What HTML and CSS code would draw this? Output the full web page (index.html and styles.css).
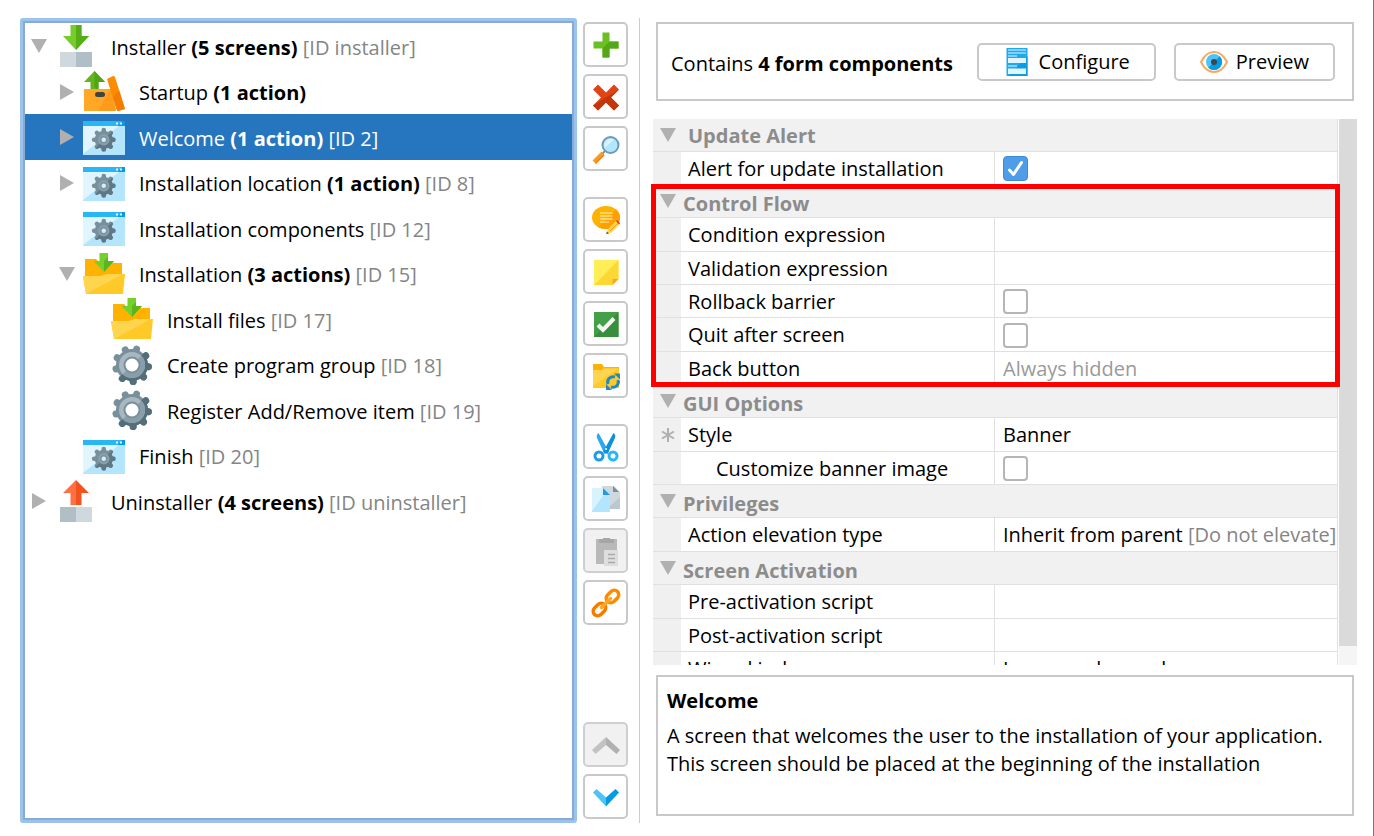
FILE: index.html
```html
<!DOCTYPE html>
<html lang="en">
<head>
<meta charset="utf-8">
<title>Screens &amp; Actions</title>
<link rel="stylesheet" href="styles.css">
</head>
<body>
<svg class="sprite" aria-hidden="true">
  <defs>
    <clipPath id="lower-right"><path d="M42 0V42H0z"/></clipPath>
    <g id="teeth9" stroke-width="7" stroke-linecap="round">
      <path d="M21 21V4.500"/>
      <path d="M21 21V4.500" transform="rotate(40 21 21)"/>
      <path d="M21 21V4.500" transform="rotate(80 21 21)"/>
      <path d="M21 21V4.500" transform="rotate(120 21 21)"/>
      <path d="M21 21V4.500" transform="rotate(160 21 21)"/>
      <path d="M21 21V4.500" transform="rotate(200 21 21)"/>
      <path d="M21 21V4.500" transform="rotate(240 21 21)"/>
      <path d="M21 21V4.500" transform="rotate(280 21 21)"/>
      <path d="M21 21V4.500" transform="rotate(320 21 21)"/>
    </g>
    <g id="teeth8" stroke-width="8" stroke-linecap="round">
      <path d="M21 4V38M4 21H38M9 9L33 33M33 9L9 33"/>
    </g>
    <symbol id="i-gear" viewBox="0 0 42 42">
      <g transform="rotate(16 21 21)"><use href="#teeth9" stroke="#78909c"/></g>
      <circle cx="21" cy="21" r="16" fill="#78909c"/>
      <g clip-path="url(#lower-right)">
        <g transform="rotate(16 21 21)"><use href="#teeth9" stroke="#546e7a"/></g>
        <circle cx="21" cy="21" r="16" fill="#546e7a"/>
      </g>
      <circle cx="21" cy="21" r="13" fill="#a9b8c0"/>
      <circle cx="21" cy="21" r="13" fill="#8a9ea9" clip-path="url(#lower-right)"/>
      <circle cx="21" cy="21" r="8.500" fill="#78909c"/>
      <circle cx="21" cy="21" r="6.500" fill="#fff"/>
    </symbol>
    <symbol id="i-window" viewBox="0 0 42 42">
      <path fill="#b3e5fc" d="M0 5h42v34H0z"/>
      <path fill="#e1f5fe" d="M0 10h36L0 38z"/>
      <path fill="#29b6f6" d="M0 5h42v5H0z"/>
      <path fill="#039be5" d="M39 5h3v5h-7z"/>
      <path fill="#e1f5fe" d="M33 6.500h2v2h-2zM37 6.500h2v2h-2z"/>
      <g transform="translate(8.800 11.800) scale(.57)">
        <use href="#teeth8" stroke="#78909c"/>
        <circle cx="21" cy="21" r="16" fill="#78909c"/>
        <g clip-path="url(#lower-right)"><use href="#teeth8" stroke="#607885"/><circle cx="21" cy="21" r="16" fill="#607885"/></g>
        <circle cx="21" cy="21" r="10" fill="#8a9ea9"/>
        <circle cx="21" cy="21" r="6" fill="#78909c"/>
        <circle cx="21" cy="21" r="4" fill="#cfeefc"/>
      </g>
    </symbol>
    <symbol id="i-installer" viewBox="0 0 42 42">
      <path fill="#cfd8dc" d="M5 27h16v15H5z"/><path fill="#b0bec5" d="M21 27h16v15H21z"/>
      <path fill="#76cc28" d="M15.500 0h11v11H34L21 25 8 11h7.500z"/>
      <path fill="#55ad17" d="M21 0h5.500v11H34L21 25z"/>
    </symbol>
    <symbol id="i-uninstaller" viewBox="0 0 42 42">
      <path fill="#b0bec5" d="M5 27h16v15H5z"/><path fill="#cfd8dc" d="M21 27h16v15H21z"/>
      <path fill="#ff7043" d="M21 0 8 13h7.500v12H21z"/><path fill="#f4511e" d="M21 0l13 13h-7.500v12H21z"/>
    </symbol>
    <symbol id="i-startup" viewBox="0 0 42 42">
      <path fill="#64b41e" d="M11.500 0 1 11h6.500v8h8v-8H22z"/>
      <path fill="#4fa615" d="M11.500 0 22 11h-6.500v8l-4-2z"/>
      <path fill="#ffa726" d="M1 18h28l4 22H1z"/>
      <path fill="#ff9a1a" d="M28 18l5 22H15z"/>
      <path fill="#fb8c00" d="M24 8l6-3q1.500 0 2 1l10 32-7 2q-1 0-1.500-2z"/>
      <path fill="#f57c00" d="M36 19l6 19-7 2q-1 0-1.500-2L30 26z"/>
      <rect x="12" y="21" width="10" height="5" rx="2.500" fill="#424242"/>
    </symbol>
    <symbol id="i-folder-in" viewBox="0 0 42 42">
      <path fill="#ffb300" d="M2 6h11l4 4h22v15H2z"/>
      <path fill="#76d02c" d="M16.500 0H25v8h6L21 19 10.500 8h6z"/>
      <path fill="#5cb41e" d="M21 8l4-4v4h6L21 19z"/>
      <path fill="#ffca28" d="M0 23h18l6-2h18l-2 20H3z"/>
      <path fill="#ffd54f" d="M0 23h18l6-2h16L3 41z"/>
    </symbol>
    <symbol id="i-down-tri" viewBox="0 0 16 16"><path fill="#b0b0b0" d="M0 1h16L8 15z"/></symbol>
    <symbol id="i-right-tri" viewBox="0 0 16 16"><path fill="#b0b0b0" d="M1 0l14 8L1 16z"/></symbol>
  </defs>
</svg>

<ul class="tree" role="tree" aria-label="Screens and actions">
  <li role="treeitem" class="node"><button class="toggle" aria-label="Collapse"><svg><use href="#i-down-tri"/></svg></button><svg class="icon"><use href="#i-installer"/></svg><span class="label">Installer <b>(5 screens)</b> <i>[ID installer]</i></span></li>
  <li role="treeitem" class="node level-1"><button class="toggle" aria-label="Expand"><svg><use href="#i-right-tri"/></svg></button><svg class="icon"><use href="#i-startup"/></svg><span class="label">Startup <b>(1 action)</b></span></li>
  <li role="treeitem" class="node level-1 selected" aria-selected="true"><button class="toggle" aria-label="Expand"><svg><use href="#i-right-tri"/></svg></button><svg class="icon"><use href="#i-window"/></svg><span class="label">Welcome <b>(1 action)</b> <i>[ID 2]</i></span></li>
  <li role="treeitem" class="node level-1"><button class="toggle" aria-label="Expand"><svg><use href="#i-right-tri"/></svg></button><svg class="icon"><use href="#i-window"/></svg><span class="label">Installation location <b>(1 action)</b> <i>[ID 8]</i></span></li>
  <li role="treeitem" class="node level-1"><span class="toggle"></span><svg class="icon"><use href="#i-window"/></svg><span class="label">Installation components <i>[ID 12]</i></span></li>
  <li role="treeitem" class="node level-1"><button class="toggle" aria-label="Collapse"><svg><use href="#i-down-tri"/></svg></button><svg class="icon"><use href="#i-folder-in"/></svg><span class="label">Installation <b>(3 actions)</b> <i>[ID 15]</i></span></li>
  <li role="treeitem" class="node level-2"><span class="toggle"></span><svg class="icon"><use href="#i-folder-in"/></svg><span class="label">Install files <i>[ID 17]</i></span></li>
  <li role="treeitem" class="node level-2"><span class="toggle"></span><svg class="icon"><use href="#i-gear"/></svg><span class="label">Create program group <i>[ID 18]</i></span></li>
  <li role="treeitem" class="node level-2"><span class="toggle"></span><svg class="icon"><use href="#i-gear"/></svg><span class="label">Register Add/Remove item <i>[ID 19]</i></span></li>
  <li role="treeitem" class="node level-1"><span class="toggle"></span><svg class="icon"><use href="#i-window"/></svg><span class="label">Finish <i>[ID 20]</i></span></li>
  <li role="treeitem" class="node"><button class="toggle" aria-label="Expand"><svg><use href="#i-right-tri"/></svg></button><svg class="icon"><use href="#i-uninstaller"/></svg><span class="label">Uninstaller <b>(4 screens)</b> <i>[ID uninstaller]</i></span></li>
</ul>

<div class="toolbar" role="toolbar" aria-label="Tree actions">
  <div class="tools">
    <button class="tool" aria-label="Add"><svg viewBox="0 0 28 28"><path fill="#6abf23" d="M10.500 1.500h7v9h9v7h-9v9h-7v-9h-9v-7h9z"/><path fill="#54a818" d="M17.500 10.500h9v7h-9v9h-7v-9z"/></svg></button>
    <button class="tool" aria-label="Delete"><svg viewBox="0 0 28 28"><path fill="#e04416" d="M6 1.500l8 8 8-8 5 5-8 8 8 8-5 5-8-8-8 8-5-5 8-8-8-8z"/><path fill="#c2360c" d="M27 6.500l-8 8 8 8-5 5-8-8-8 8-5-5z"/></svg></button>
    <button class="tool" aria-label="Search"><svg viewBox="0 0 28 28"><path stroke="#78909c" stroke-width="2" d="M13 16l-3 3"/><path stroke="#fb9a1e" stroke-width="4" d="M11 18l-9 9"/><path stroke="#ef7f0a" stroke-width="1.500" d="M12 20l-8.500 8.500"/><circle cx="18.500" cy="10" r="8" fill="#b3e5fc" stroke="#6c9bb8" stroke-width="2"/><path fill="#d9f3fe" d="M12.500 13A7 7 0 0 1 22 4.500z"/></svg></button>
  </div>
  <div class="tools">
    <button class="tool" aria-label="Comment"><svg viewBox="0 0 28 28"><ellipse cx="14" cy="11.500" rx="14" ry="11.500" fill="#ffb300"/><path fill="#ffa000" d="M24 3.500A14 11.500 0 0 1 6 21z"/><path stroke="#fff3d0" stroke-width="1.200" d="M8 7h12.500M8 10h12.500M8 13h12.500M8 16h9"/><path fill="#ffd54f" d="M24 15l3.500 3.500-8 8-5 1.500 1.500-5z"/><path fill="#e53935" d="M24 15l1-.8q1 0 3 3.300l-1 1z"/><path fill="#6d4c41" d="M15 25.500l2 2-3 .5z"/><path stroke="#f0a020" d="M26 17l-8 8"/></svg></button>
    <button class="tool" aria-label="Note"><svg viewBox="0 0 28 28"><path fill="#ffee58" d="M2 2h24.500v19l-6 6H2z"/><path fill="#fdd835" d="M26.500 2v19l-6 6H2z"/><path fill="#f9a825" d="M20.500 27v-6h6z"/></svg></button>
    <button class="tool" aria-label="Enable"><svg viewBox="0 0 28 28"><path fill="#43a047" d="M2 2h24.500v25H2z"/><path fill="#388e3c" d="M26.500 2v25H2z"/><path fill="none" stroke="#f5f5f5" stroke-width="4" d="M6 15l5 5L22 8.500"/></svg></button>
    <button class="tool" aria-label="Update folder"><svg viewBox="0 0 28 28"><path fill="#ffb300" d="M1 2h9l2 3h15v7H1z"/><path fill="#ffca28" d="M1 8h9l2-1.500h15V26H1z"/><path fill="#ffd54f" d="M1 8h9l2-1.500h14L1 24z"/><g fill="none" stroke="#1e88c9" stroke-width="3"><path d="M16 22a5.500 5.500 0 0 1 7-7M26 18a5.500 5.500 0 0 1-7 7"/></g><path fill="#1e88c9" d="M22 11.500h6v6zM20 28h-6v-6z"/></svg></button>
  </div>
  <div class="tools">
    <button class="tool" aria-label="Cut"><svg viewBox="0 0 28 28"><path fill="#29a9ee" d="M6.500 0q-3 2-1 6l7 15 4.500-2z"/><path fill="#0d8fdc" d="M21.500 0q3 2 1 6l-7 15-4.500-2z"/><circle cx="14" cy="16" r="1" fill="#fff"/><g fill="none" stroke-width="3"><circle cx="7" cy="23" r="4" stroke="#1e9be6"/><circle cx="21" cy="23" r="4" stroke="#29b6f6"/></g></svg></button>
    <button class="tool" aria-label="Copy"><svg viewBox="0 0 28 28"><path fill="#cfd8dc" d="M10 1h12l6 6v17H10z"/><path fill="#bcc8ce" d="M28 12v12H15z"/><path fill="#78909c" d="M21 1l6 6h-6z"/><path fill="#b3e5fc" d="M0 3h11l7 7v17H0z"/><path fill="#d9f3fe" d="M0 3h11l3 4L0 26z"/><path fill="#1e9be6" d="M11 3l7 7h-7z"/></svg></button>
    <button class="tool" aria-label="Paste" disabled><svg viewBox="0 0 28 28"><path fill="#b9b9b9" d="M4 2h21v25H4z"/><path fill="#a6a6a6" d="M7 2h4V1h7v1h4v4H7z"/><path fill="#dedede" d="M12 13h14v16H12z"/><path stroke="#aaa" stroke-width="1.500" d="M16 17.500h7M16 21.500h7M16 25.500h7"/></svg></button>
    <button class="tool" aria-label="Link"><svg viewBox="0 0 28 28"><g fill="none" stroke-width="3.500"><rect x="-7" y="-4.500" width="14" height="9" rx="4.500" stroke="#f57c00" transform="translate(7.500 20.500) rotate(-45)"/><rect x="-7" y="-4.500" width="14" height="9" rx="4.500" stroke="#fb8c00" transform="translate(20.500 7.500) rotate(-45)"/><path stroke="#ffa726" stroke-linecap="round" d="M9.500 18.500l9-9"/></g></svg></button>
  </div>
  <div class="tools last">
    <button class="tool" aria-label="Move up" disabled><svg viewBox="0 0 28 28"><path fill="#c2c2c2" d="M14 6v8L3.500 23 0 19z"/><path fill="#b0b0b0" d="M14 6v8l10.500 9L28 19z"/></svg></button>
    <button class="tool" aria-label="Move down"><svg viewBox="0 0 28 28"><path fill="#4fc3f7" d="M14 23.500v-9L4.500 6 1 9.500z"/><path fill="#039be5" d="M14 23.500v-9L23.500 6 27 9.500z"/></svg></button>
  </div>
</div>

<main class="details">
  <section class="panel form-panel">
    <p>Contains <b>4 form components</b></p>
    <button class="action"><svg viewBox="0 0 28 28"><path fill="#1eaaf0" d="M3.500 0h21v28h-21z"/><path fill="#0d9be6" d="M24.500 8v20h-19z"/><path fill="#e1f5fe" d="M5 1.500h18v1H5zM5 4.500h18v1H5zM5 7.500h9v1H5zM5 10h18v5H5zM5 17.500h9v1H5zM5 20.500h18v5.500H5z"/></svg>Configure</button>
    <button class="action"><svg viewBox="0 0 28 28"><path fill="#fff" stroke="#f9a85c" stroke-width="2" d="M1 14Q6 4 14 4t13 10q-5 10-13 10T1 14z"/><circle cx="14" cy="14" r="8" fill="#4fc3f7"/><path fill="#039be5" d="M19.700 8.300a8 8 0 0 1-11.400 11.400z"/><circle cx="14" cy="14" r="3" fill="#37474f"/></svg>Preview</button>
  </section>

  <div class="properties">
    <table>
      <colgroup><col class="col-mark"><col class="col-name"><col></colgroup>
      <tbody>
        <tr class="group"><th class="mark"><svg><use href="#i-down-tri"/></svg></th><th colspan="2">Update Alert</th></tr>
        <tr><td class="mark"></td><td><label for="alert">Alert for update installation</label></td><td><input type="checkbox" id="alert" checked></td></tr>
      </tbody>
      <tbody class="marked">
        <tr class="group"><th class="mark"><svg><use href="#i-down-tri"/></svg><span class="frame"></span></th><th colspan="2">Control Flow</th></tr>
        <tr><td class="mark"></td><td><label for="cond">Condition expression</label></td><td><input type="text" id="cond"></td></tr>
        <tr><td class="mark"></td><td><label for="valid">Validation expression</label></td><td><input type="text" id="valid"></td></tr>
        <tr><td class="mark"></td><td><label for="rollback">Rollback barrier</label></td><td><input type="checkbox" id="rollback"></td></tr>
        <tr><td class="mark"></td><td><label for="quit">Quit after screen</label></td><td><input type="checkbox" id="quit"></td></tr>
        <tr><td class="mark"></td><td>Back button</td><td class="muted">Always hidden</td></tr>
      </tbody>
      <tbody>
        <tr class="group"><th class="mark"><svg><use href="#i-down-tri"/></svg></th><th colspan="2">GUI Options</th></tr>
        <tr><td class="mark"><svg viewBox="0 0 16 16"><path stroke="#b0b0b0" stroke-width="2" d="M8 1v14M2 4.500l12 7M14 4.500l-12 7"/></svg></td><td>Style</td><td>Banner</td></tr>
        <tr><td class="mark"></td><td class="nested"><label for="banner">Customize banner image</label></td><td><input type="checkbox" id="banner"></td></tr>
      </tbody>
      <tbody>
        <tr class="group"><th class="mark"><svg><use href="#i-down-tri"/></svg></th><th colspan="2">Privileges</th></tr>
        <tr><td class="mark"></td><td>Action elevation type</td><td>Inherit from parent <i>[Do not elevate]</i></td></tr>
      </tbody>
      <tbody>
        <tr class="group"><th class="mark"><svg><use href="#i-down-tri"/></svg></th><th colspan="2">Screen Activation</th></tr>
        <tr><td class="mark"></td><td><label for="pre">Pre-activation script</label></td><td><input type="text" id="pre"></td></tr>
        <tr><td class="mark"></td><td><label for="post">Post-activation script</label></td><td><input type="text" id="post"></td></tr>
        <tr><td class="mark"></td><td>Wizard index</td><td>Leave unchanged</td></tr>
      </tbody>
    </table>
    <div class="scrollbar"><div class="thumb"></div></div>
  </div>

  <section class="panel description">
    <h2>Welcome</h2>
    <p>A screen that welcomes the user to the installation of your application. This screen should be placed at the beginning of the installation</p>
  </section>
</main>
</body>
</html>
```
FILE: styles.css
```css
* { box-sizing: border-box; }

body {
  margin: 0;
  height: 100vh;
  padding: 18px 0 13px 20px;
  border-right: 1px solid #777;
  background: #fff;
  color: #000;
  font: 20px/28px "Open Sans", "Noto Sans", sans-serif;
  display: grid;
  grid-template-columns: minmax(0, 557fr) 63px minmax(0, 733fr);
  grid-template-rows: minmax(0, 1fr);
}

.sprite { position: absolute; width: 0; height: 0; }
svg { display: block; flex: none; overflow: visible; }
button, input { font: inherit; color: inherit; }
p, h2 { margin: 0; }
i { font-style: normal; color: #858585; }

/* Tree */
.tree {
  margin: 0;
  list-style: none;
  border: 3px solid #9bc3eb;
  border-radius: 3px;
  box-shadow: inset 0 0 0 2px #86acd6;
  padding: 2px;
  overflow: hidden;
}
.node {
  display: flex;
  align-items: center;
  height: 46px;
  padding-left: 6px;
  white-space: nowrap;
}
.node:nth-child(even) { height: 45px; }
.label { padding-top: 3px; }
.level-1 { padding-left: 34px; }
.level-2 { padding-left: 62px; }
.toggle {
  width: 16px;
  height: 16px;
  margin-right: 8px;
  padding: 0;
  border: 0;
  background: none;
}
.toggle svg { width: 16px; height: 16px; }
.icon { width: 42px; height: 42px; margin-right: 14px; }
.selected, .selected i { color: #fff; }
.selected { background: #2675bf; }

/* Toolbar */
.toolbar {
  display: flex;
  flex-direction: column;
  gap: 26px;
  padding: 4px 11px 4px 6px;
  border-right: 1px solid #ccc;
}
.tools { display: grid; gap: 7px; }
.last { margin-top: auto; }
.tool {
  width: 45px;
  height: 45px;
  padding: 0;
  display: grid;
  place-items: center;
  background: #fff;
  border: 2px solid #c9c9c9;
  border-radius: 5px;
}
.tool:disabled { background: #f1f1f1; border-color: #cfcfcf; }
.tool svg, .action svg { width: 28px; height: 28px; }

/* Details */
.details {
  display: flex;
  flex-direction: column;
  padding: 4px 16px 7px 11px;
}
.panel {
  margin: 0 3px 0 5px;
  border: 2px solid #c9c9c9;
}
.form-panel {
  display: flex;
  align-items: center;
  gap: 18px;
  min-height: 79px;
  padding: 0 17px 0 13px;
}
.form-panel p { flex: 1; padding-top: 4px; }
.action {
  display: flex;
  align-items: center;
  gap: 8px;
  height: 38px;
  padding: 0 24px;
  background: #fff;
  border: 2px solid #c9c9c9;
  border-radius: 5px;
}
.description { min-height: 141px; padding: 10px 9px; }
.description h2 { font-size: 20px; line-height: 28px; margin-bottom: 7px; }

/* Property table */
.properties {
  display: flex;
  flex: 1;
  min-height: 0;
  margin: 18px 0 10px;
  padding-left: 2px;
  overflow: hidden;
}
table {
  flex: 1;
  table-layout: fixed;
  border-collapse: separate;
  border-spacing: 0;
  align-self: flex-start;
}
.col-mark { width: 28px; }
.col-name { width: 313px; }
tr { height: 33px; }
tbody + tbody tr:nth-child(3n+2) { height: 34px; }
td, th {
  height: inherit;
  padding: 1px 0 0 7px;
  border-bottom: 1px solid #e0e0e0;
  text-align: left;
  white-space: nowrap;
}
td:last-child {
  padding-left: 8px;
  border-left: 1px solid #e0e0e0;
  border-right: 1px solid #e0e0e0;
}
.mark { padding: 0 0 0 7px; background: #f0f0f0; }
.mark svg { width: 16px; height: 16px; }
.group th { background: #f1f1f1; color: #8c8c8c; }
.group th:last-child { border-right: 1px solid #e0e0e0; }
tbody + tbody .group th { padding-top: 5px; line-height: 26px; }
tbody + tbody .group th.mark { padding-top: 0; }
tbody + tbody .group th:last-child { padding-left: 2px; }
td.nested { padding-left: 35px; }
.muted { color: #9a9a9a; }

.marked { position: relative; }
.frame {
  position: absolute;
  inset: -1px -2px -2px;
  border: 5px solid #f00;
  pointer-events: none;
}

input[type="text"] {
  display: block;
  width: 100%;
  height: 28px;
  padding: 0;
  border: 0;
  outline: 0;
  background: none;
}
input[type="checkbox"] {
  appearance: none;
  display: block;
  width: 25px;
  height: 25px;
  margin: 0;
  border: 2px solid #b5b5b5;
  border-radius: 4px;
  background: #fff;
}
input[type="checkbox"]:checked {
  border: 1px solid #3f8bd2;
  background: #4d9de8 url("data:image/svg+xml,%3Csvg xmlns='http://www.w3.org/2000/svg' viewBox='0 0 23 23'%3E%3Cpath d='M5.500 13l4 4.500 8-12' fill='none' stroke='white' stroke-width='3' stroke-linecap='round' stroke-linejoin='round'/%3E%3C/svg%3E") center / 23px no-repeat;
}

.scrollbar { width: 19px; padding-left: 1px; background: #f5f5f5 content-box; }
.thumb { height: 96.5%; background: #dadada; }
```
